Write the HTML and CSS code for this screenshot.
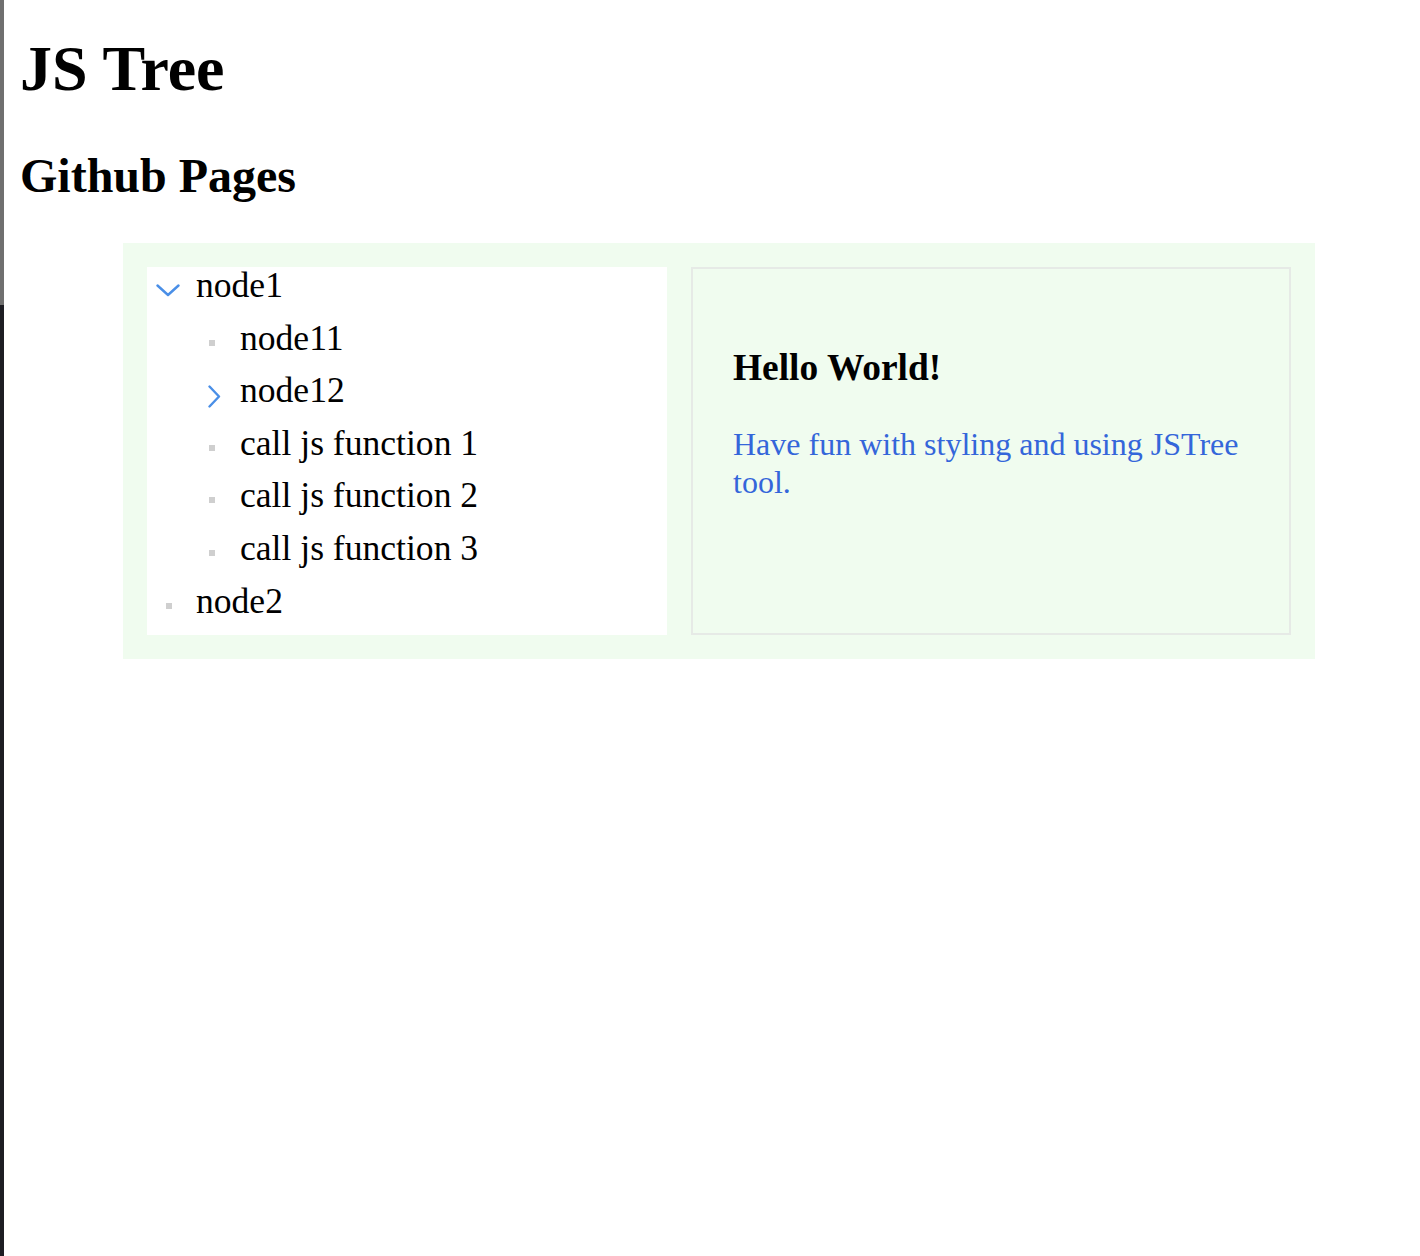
FILE: index.html
```html
<!DOCTYPE html>
<html lang="en">
<head>
<meta charset="utf-8">
<title>JS Tree</title>
<link rel="stylesheet" href="styles.css">
</head>
<body>
<div class="edge"></div>
<main class="page">
  <h1 class="title">JS Tree</h1>
  <h2 class="subtitle">Github Pages</h2>
  <section class="demo">
    <div class="tree">
      <ul class="tree-list">
        <li>
          <div class="row">
            <span class="icon"><svg class="chev-down" width="24" height="13" viewBox="0 0 24 13"><path d="M1.5 1.5 L12 11 L22.5 1.5" fill="none" stroke="#4a8fe7" stroke-width="2.4" stroke-linecap="round" stroke-linejoin="round"/></svg></span>
            <span class="label">node1</span>
          </div>
          <ul class="tree-list nested">
            <li><div class="row"><span class="icon"><span class="leaf"></span></span><span class="label">node11</span></div></li>
            <li><div class="row"><span class="icon"><svg class="chev-right" width="13" height="23" viewBox="0 0 13 23"><path d="M1.5 1.5 L11 11.5 L1.5 21.5" fill="none" stroke="#4a8fe7" stroke-width="2.4" stroke-linecap="round" stroke-linejoin="round"/></svg></span><span class="label">node12</span></div></li>
            <li><div class="row"><span class="icon"><span class="leaf"></span></span><span class="label">call js function 1</span></div></li>
            <li><div class="row"><span class="icon"><span class="leaf"></span></span><span class="label">call js function 2</span></div></li>
            <li><div class="row"><span class="icon"><span class="leaf"></span></span><span class="label">call js function 3</span></div></li>
          </ul>
        </li>
        <li><div class="row"><span class="icon"><span class="leaf"></span></span><span class="label">node2</span></div></li>
      </ul>
    </div>
    <div class="panel">
      <h3 class="panel-title">Hello World!</h3>
      <p class="panel-text">Have fun with styling and using JSTree tool.</p>
    </div>
  </section>
</main>
</body>
</html>
```
FILE: styles.css
```css
html, body {
  margin: 0;
  padding: 0;
  background: #ffffff;
}
body {
  font-family: "Liberation Serif", "Times New Roman", serif;
  color: #000;
}
.edge {
  position: fixed;
  left: 0;
  top: 0;
  width: 4px;
  height: 100%;
  background: linear-gradient(to bottom, #6f6f6f 0, #6f6f6f 305px, #1d1d23 305px, #1d1d23 100%);
}
.page {
  padding: 32px 0 0 20px;
}
.title {
  margin: 0;
  font-size: 64px;
  line-height: 74px;
  font-weight: bold;
}
.subtitle {
  margin: 42px 0 0 0;
  font-size: 48px;
  line-height: 55px;
  font-weight: bold;
}
.demo {
  margin: 40px 0 0 103px;
  width: 1192px;
  box-sizing: border-box;
  padding: 24px;
  background: #f0fcef;
  display: flex;
  gap: 24px;
}
.tree {
  width: 520px;
  height: 368px;
  background: #ffffff;
  padding-top: 1px;
  box-sizing: border-box;
}
.tree-list {
  list-style: none;
  margin: 0;
  padding: 0;
}
.tree-list.nested {
  padding-left: 44px;
}
.row {
  display: flex;
  align-items: flex-start;
  height: 34px;
  line-height: 34px;
  margin-bottom: 18.6px;
  font-size: 35.6px;
}
.icon {
  width: 49px;
  height: 34px;
  flex: none;
  display: flex;
  align-items: flex-start;
}
.chev-down {
  margin: 15.5px 0 0 9px;
  display: block;
}
.chev-right {
  margin: 12px 0 0 17px;
  display: block;
}
.leaf {
  display: block;
  width: 6px;
  height: 6px;
  background: #cfcfcf;
  margin: 19px 0 0 18px;
}
.tree > .tree-list > li:last-child .leaf {
  margin-left: 19px;
}
.label {
  white-space: nowrap;
}
.panel {
  width: 600px;
  height: 368px;
  box-sizing: border-box;
  border: 2px solid #e6eae6;
  background: #f0fcef;
  padding: 77px 40px 0 40px;
}
.panel-title {
  margin: 0;
  font-size: 37.44px;
  line-height: 43px;
  font-weight: bold;
}
.panel-text {
  margin: 36px 0 0 0;
  font-size: 32px;
  line-height: 38.4px;
  color: #3466da;
}
```
